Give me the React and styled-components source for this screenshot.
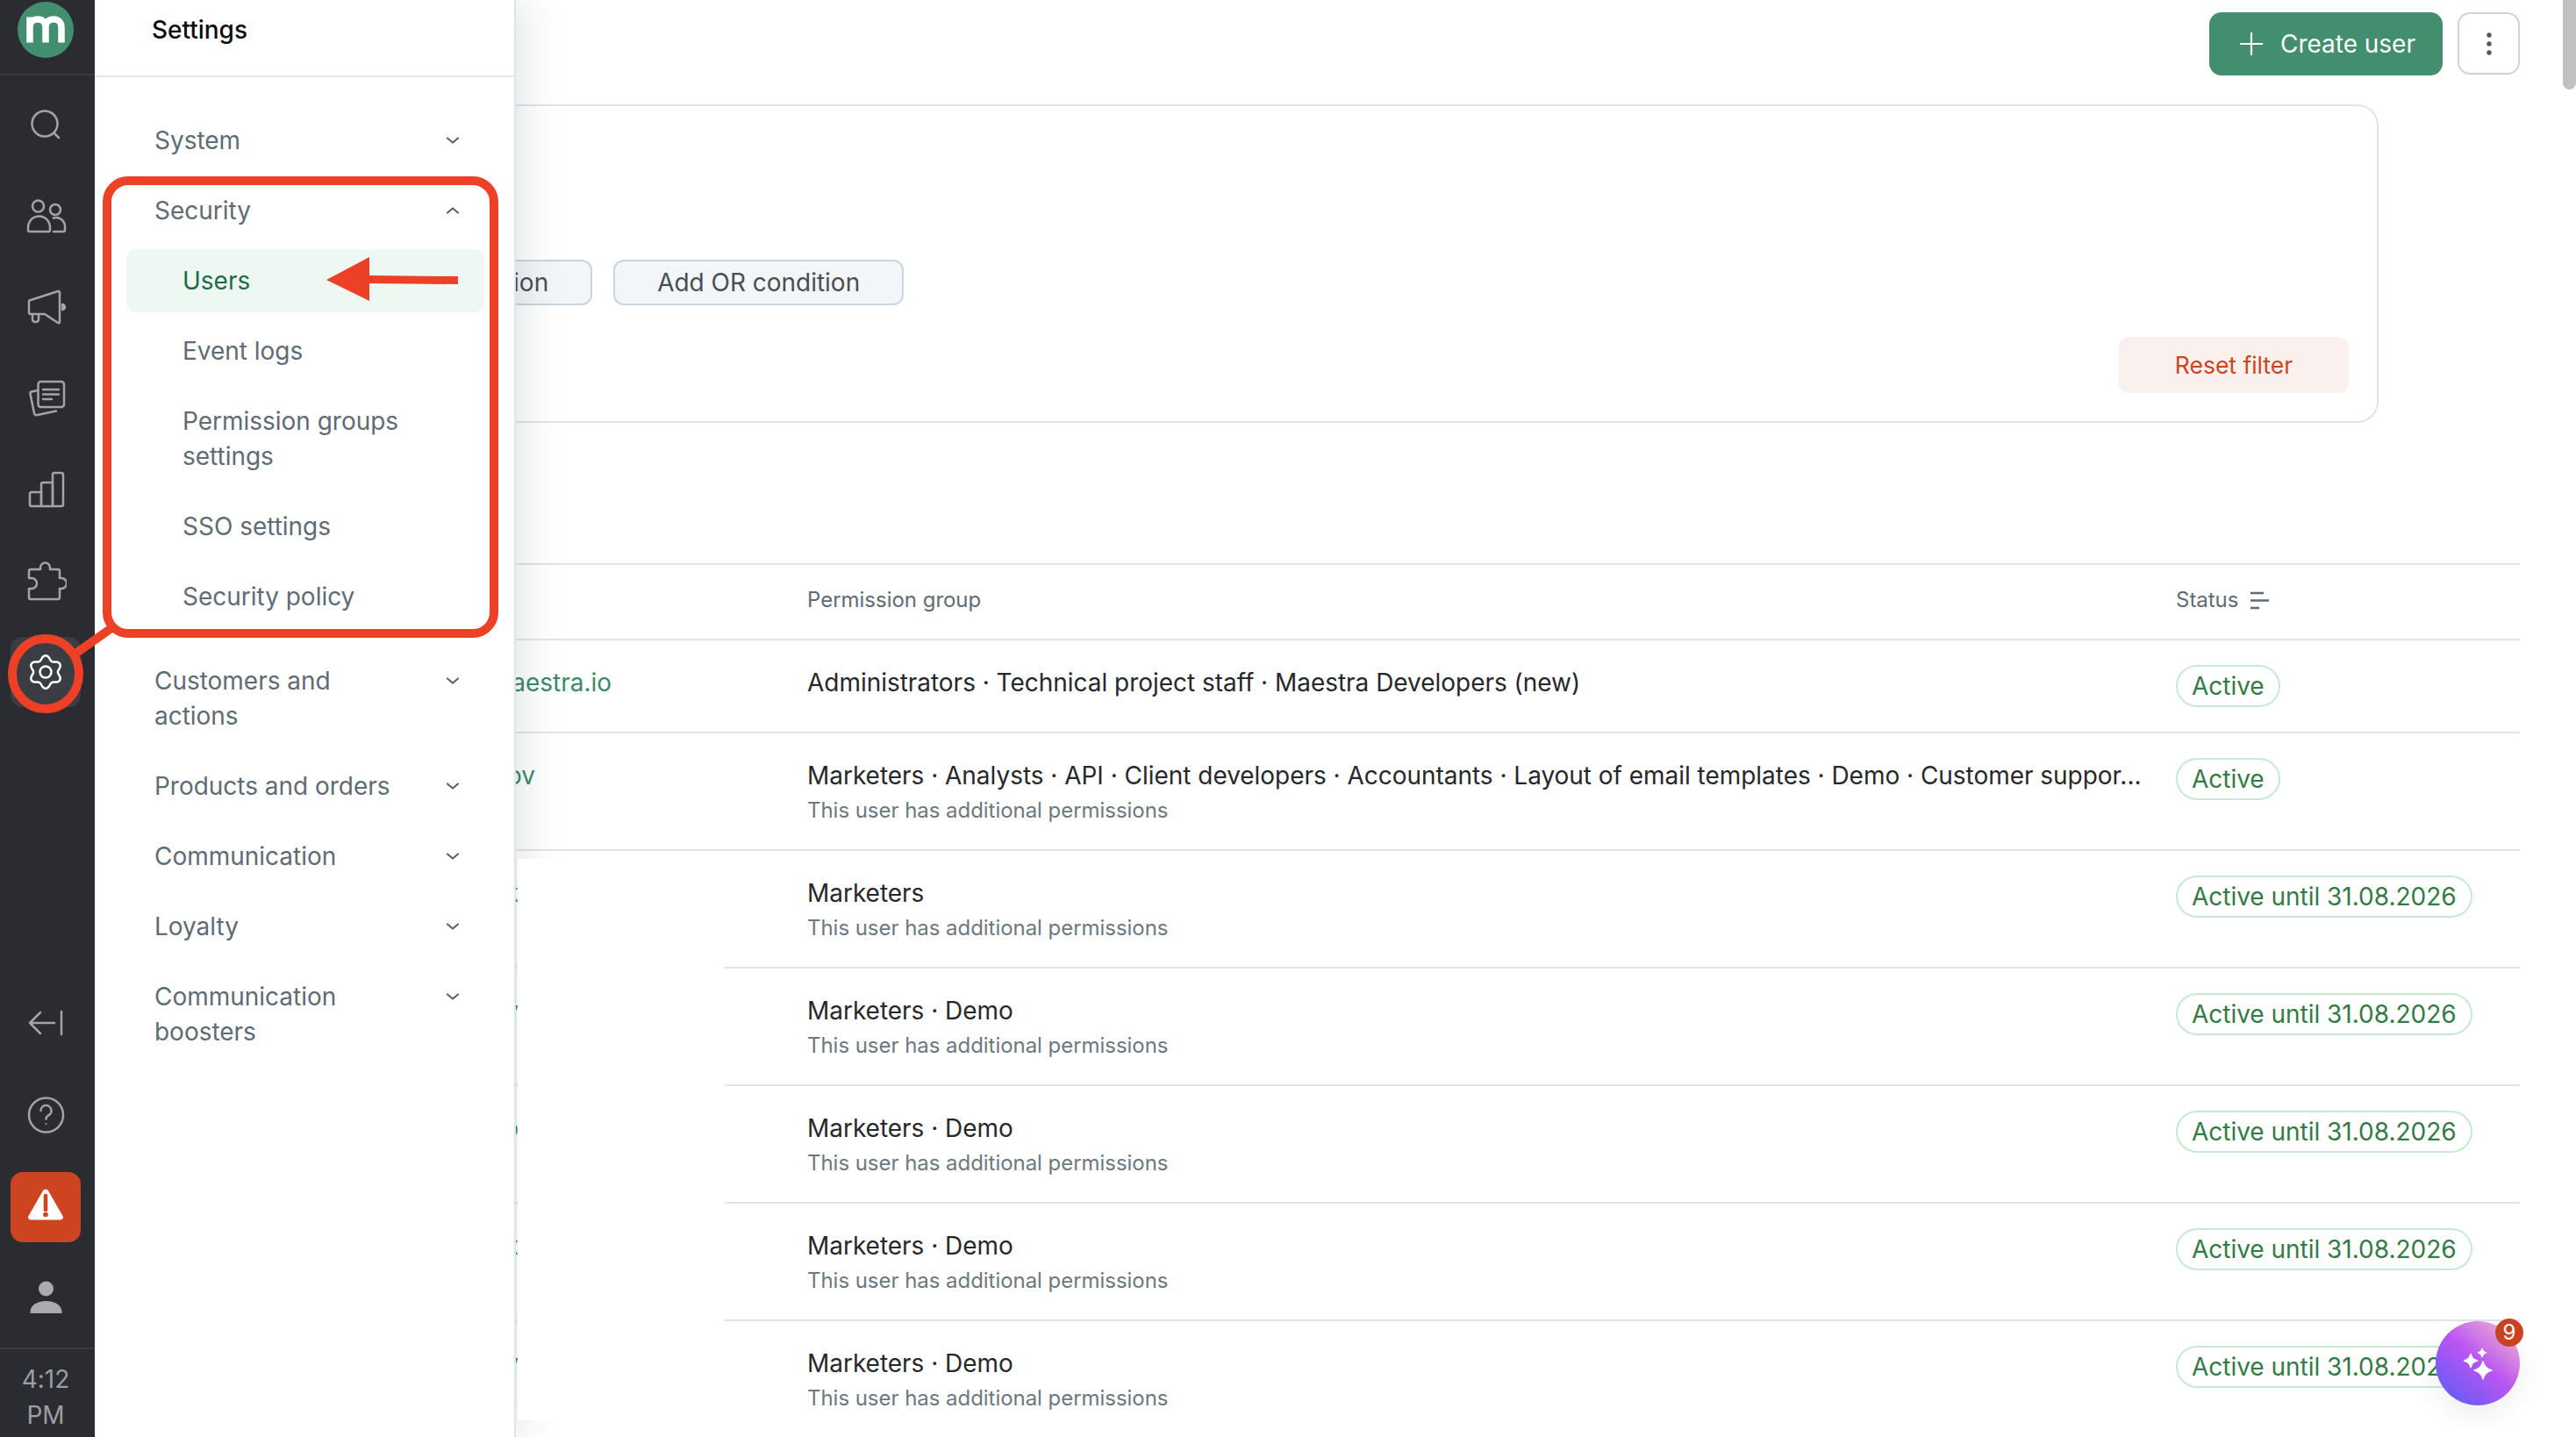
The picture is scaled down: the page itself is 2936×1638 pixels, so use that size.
import React from "react";
import styled, { createGlobalStyle } from "styled-components";

const Global = createGlobalStyle`
  html, body { margin: 0; padding: 0; width: 2936px; height: 1638px; overflow: hidden; background: #fff; }
  body { font-family: Inter, "Noto Sans", sans-serif; font-size: 28px; line-height: 40px; color: #26282c; letter-spacing: -0.02px; }
  * { box-sizing: border-box; }
`;

const Page = styled.div`
  position: relative; display: flex; width: 2936px; height: 1638px; overflow: hidden; background: #fff;
`;

/* ---------- rail ---------- */
const Rail = styled.aside`
  position: relative; z-index: 3; flex: 0 0 108px; height: 100%;
  display: flex; flex-direction: column; background: #2a2c32; color: #a2a4a8;
`;
const LogoBar = styled.div`
  height: 86px; flex: none; padding: 2px 0 0 20px; border-bottom: 2px solid #3b3d44;
`;
const RailGroup = styled.nav`
  display: flex; flex-direction: column; gap: ${p => p.$gap}px; padding: ${p => p.$top}px 0 0 12px;
`;
const RailFoot = styled.div`
  margin-top: auto; display: flex; flex-direction: column;
`;
const RailItem = styled.div`
  width: 80px; height: 80px; border-radius: 14px; display: flex; align-items: center; justify-content: center;
  background: ${p => (p.$warn ? "#cc4420" : p.$active ? "#3a3d44" : "transparent")};
  color: ${p => (p.$active ? "#fff" : "#a2a4a8")};
`;
const Clock = styled.div`
  margin-top: 15px; height: 102px; padding: 14px 4px 0 0; border-top: 2px solid #3b3d44;
  text-align: center; font-size: 28px; line-height: 41px; color: #9b9ea3; width: 108px;
`;
const Ico = styled.svg`
  width: 48px; height: 48px; fill: none; stroke: currentColor; stroke-width: 2.5;
  stroke-linecap: round; stroke-linejoin: round; display: block;
`;

/* ---------- settings panel ---------- */
const Panel = styled.aside`
  position: relative; z-index: 2; flex: 0 0 480px; height: 100%; background: #fff;
  border-right: 2px solid #dfe4e8; box-shadow: 0 0 50px rgba(30, 40, 50, 0.17);
`;
const PanelHead = styled.header`
  height: 88px; padding: 14px 0 0 65px; border-bottom: 2px solid #e3e8ec;
  font-weight: 500; color: #0c0d0e; font-size: 28px; line-height: 40px;
`;
const Menu = styled.nav`
  padding-top: 32px; display: flex; flex-direction: column;
`;
const Section = styled.div`
  display: flex; align-items: flex-start; justify-content: space-between;
  padding: 20px 62px 20px 68px; color: #5f6b75;
`;
const SectionLabel = styled.span`
  width: 292px;
`;
const Chevron = styled.svg`
  flex: none; width: 16px; height: 10px; margin-top: 15px; fill: none; stroke: #5a636b;
  stroke-width: 2.2; stroke-linecap: round; stroke-linejoin: round;
  transform: ${p => (p.$up ? "rotate(180deg)" : "none")};
`;
const SubList = styled.div`
  display: flex; flex-direction: column; margin-bottom: 16px;
`;
const SubItem = styled.div`
  margin: 4px 34px 4px 36px; padding: 16px 60px 16px 64px; border-radius: 12px;
  color: ${p => (p.$active ? "#1f6a48" : "#5f6b75")};
  background: ${p => (p.$active ? "#eef8f2" : "transparent")};
`;

/* ---------- main ---------- */
const Main = styled.main`
  position: relative; z-index: 1; flex: 1 1 auto; min-width: 0; margin-left: -480px;
  height: 100%; padding: 14px 64px 0 40px; overflow: hidden;
`;
const TopBar = styled.div`
  display: flex; justify-content: flex-end; gap: 17px; height: 72px;
`;
const CreateButton = styled.div`
  display: flex; align-items: center; gap: 20px; width: 266px; height: 72px; padding-left: 35px;
  background: #428e6e; color: #fff; border-radius: 14px;
`;
const MoreButton = styled.div`
  width: 71px; height: 71px; border: 2px solid #c9d5e0; border-radius: 14px;
  display: flex; align-items: center; justify-content: center; background: #fff;
`;
const FilterCard = styled.section`
  margin: 33px 161px 0 0; height: 363px; padding: 175px 32px 0 173px;
  border: 2px solid #dfe5ea; border-radius: 24px; display: flex; flex-direction: column;
`;
const ConditionRow = styled.div`
  display: flex; gap: 24px;
`;
const GhostButton = styled.div`
  height: 52px; padding: 0 48px; border: 2px solid #c9d5e0; border-radius: 12px; background: #f3f6f8;
  color: #4b4d50; display: flex; align-items: center; white-space: nowrap;
`;
const ResetButton = styled.div`
  align-self: flex-end; margin-top: 36px; width: 262px; height: 64px; border-radius: 12px;
  background: #faf0ed; color: #cc4522; font-size: 26.5px;
  display: flex; align-items: center; justify-content: center;
`;
const Table = styled.section`
  margin-top: 160px; border-top: 2px solid #e0e5ea;
`;
const Row = styled.div`
  display: grid; grid-template-columns: 772px 1560px 1fr; min-height: ${p => p.$h}px;
  padding: ${p => p.$pt || 28}px 0 0; border-bottom: 2px solid #e0e5ea; box-sizing: content-box;
`;
const HeadCell = styled.div`
  height: 34px; font-size: 24px; line-height: 34px; color: #5f6b75; display: flex; align-items: center; gap: 13px;
`;
const NameCell = styled.div`
  text-align: right; color: #3b8a6a; padding-right: ${p => p.$end}px; white-space: nowrap;
`;
const PermCell = styled.div`
  min-width: 0;
`;
const Groups = styled.div`
  white-space: nowrap; color: #26282c; letter-spacing: -0.03px;
`;
const Extra = styled.div`
  margin-top: 3px; font-size: 24px; line-height: 34px; color: #6d7880; letter-spacing: -0.04px;
`;
const StatusCell = styled.div`
  margin-top: 0;
`;
const Pill = styled.span`
  display: inline-flex; align-items: center; height: 48px; padding: 0 16px;
  border: 2px solid #c8e9d4; border-radius: 24px; color: #347a47; white-space: nowrap; background: #fff;
`;

/* ---------- overlays ---------- */
const Redaction = styled.div`
  position: absolute; z-index: 4; left: 590px; top: 979px; width: 236px; height: 640px; background: #fff;
`;
const Thumb = styled.div`
  position: absolute; z-index: 5; right: 0; top: 0; width: 15px; height: 102px; background: #c1c1c1;
  border-radius: 0 0 8px 8px;
`;
const Fab = styled.div`
  position: absolute; z-index: 6; left: 2776px; top: 1506px; width: 96px; height: 96px; border-radius: 50%;
  background: linear-gradient(40deg, #5f5cf8 8%, #bb55f2 52%, #f0b8d0 95%);
  box-shadow: 0 10px 30px rgba(40, 30, 80, 0.08);
`;
const FabBadge = styled.span`
  position: absolute; left: 68px; top: -3px; width: 32px; height: 32px; border-radius: 50%;
  background: #c94320; color: #fff; font-size: 24px; line-height: 32px; text-align: center;
`;
const Annotation = styled.svg`
  position: absolute; z-index: 7; left: 0; top: 0; width: 2936px; height: 1638px; pointer-events: none;
`;

/* ---------- icons ---------- */
const SearchIcon = () => (
  <Ico viewBox="0 0 48 48"><circle cx="23" cy="23" r="14.5" /><path d="M34 34l5 5" /></Ico>
);
const UsersIcon = () => (
  <Ico viewBox="0 0 48 48">
    <circle cx="15.5" cy="13" r="6.5" />
    <path d="M6 42h21a2 2 0 0 0 2-2v-3a12.5 12.5 0 0 0-25 0v3a2 2 0 0 0 2 2z" />
    <circle cx="35" cy="17" r="6" />
    <path d="M33 26.5a10 10 0 0 1 13 9.5v4a2 2 0 0 1-2 2H33" />
  </Ico>
);
const MegaphoneIcon = () => (
  <Ico viewBox="0 0 48 48">
    <path d="M7 16L38 6q2-.5 2 1v34q0 2-2 1L23 32H7q-2 0-2-2V18q0-2 2-2z" />
    <path d="M9 32v6a3 3 0 0 0 3 3h1a3 3 0 0 0 3-3v-6" />
    <path d="M43 21a3 3 0 0 1 0 6z" fill="currentColor" />
  </Ico>
);
const CardsIcon = () => (
  <Ico viewBox="0 0 48 48">
    <rect x="15.5" y="5" width="29.5" height="29" rx="3" />
    <path d="M21 14h18M21 19.5h18M21 25h10" />
    <path d="M15 15l-7 1.5q-2 .5-1.5 2.5L11 41q.5 3 3.500 2L36 38.500" />
  </Ico>
);
const ChartIcon = () => (
  <Ico viewBox="0 0 48 48">
    <path d="M8 27h11v16H8a2 2 0 0 1-2-2V29a2 2 0 0 1 2-2z" />
    <path d="M19 18a2 2 0 0 1 2-2h11v27H19z" />
    <path d="M32 7a2 2 0 0 1 2-2h8a2 2 0 0 1 2 2v34a2 2 0 0 1-2 2H32z" />
  </Ico>
);
const PuzzleIcon = () => (
  <Ico viewBox="0 0 48 48">
    <path d="M7 11h11V9a5.500 5.500 0 1 1 11 0v2h9a2 2 0 0 1 2 2v8h2a6 6 0 0 1 0 12h-2v10a2 2 0 0 1-2 2H7a2 2 0 0 1-2-2V33h3a6 6 0 0 0 0-12H5v-8a2 2 0 0 1 2-2z" />
  </Ico>
);
const gearPath = (() => {
  const pts = [];
  for (let i = 0; i < 180; i++) {
    const t = (i / 180) * Math.PI * 2;
    const r = 16.3 + 2.4 * Math.cos(6 * (t + Math.PI / 2));
    pts.push(`${(24 + r * Math.cos(t)).toFixed(2)} ${(24 + r * Math.sin(t)).toFixed(2)}`);
  }
  return `M${pts.join("L")}Z`;
})();
const GearIcon = () => (
  <Ico viewBox="0 0 48 48"><path d={gearPath} /><circle cx="24" cy="24" r="6.500" /></Ico>
);
const CollapseIcon = () => (
  <Ico viewBox="0 0 48 48"><path d="M34 24H6M18 12L6 24l12 12M42 11v26" /></Ico>
);
const HelpIcon = () => (
  <Ico viewBox="0 0 48 48">
    <circle cx="24.500" cy="24" r="19.500" />
    <path d="M18.500 19a6 6 0 1 1 8.500 5.500c-1.800.9-2.500 2-2.500 4" />
    <circle cx="24.500" cy="34" r="1.100" fill="currentColor" stroke="none" />
  </Ico>
);
const WarnIcon = () => (
  <svg width="48" height="48" viewBox="0 0 48 48">
    <g transform="translate(0 -3)">
      <path d="M24 6.500c1.300 0 2.400.7 3 1.800l16.600 29c1 1.800-.3 4.200-2.500 4.200H6.900c-2.200 0-3.500-2.400-2.500-4.200L21 8.300c.6-1.100 1.700-1.800 3-1.800z" fill="#fff" />
      <path d="M24 14v16" stroke="#cc4420" strokeWidth="4.600" strokeLinecap="round" />
      <circle cx="24" cy="35.500" r="2.800" fill="#cc4420" />
    </g>
  </svg>
);
const PersonIcon = () => (
  <svg width="48" height="48" viewBox="0 0 48 48" fill="#a9abaf">
    <circle cx="24.500" cy="12" r="8.500" />
    <path d="M6.500 40v-1.500C6.500 30 16 26 24.500 26S42.500 30 42.500 38.500V40z" />
  </svg>
);
const Logo = () => (
  <svg width="64" height="64" viewBox="0 0 64 64">
    <circle cx="32" cy="32" r="32" fill="#428e6e" />
    <path d="M14 46.500V17.500M14 29c0-6 4-9 9-9s9 3 9 9v17.500M32 29c0-6 4-9 9-9s9 3 9 9v17.500" fill="none" stroke="#fff" strokeWidth="7.500" />
  </svg>
);
const Chev = ({ up }) => (
  <Chevron viewBox="0 0 16 10" $up={up}><path d="M2 2.500l6 5 6-5" /></Chevron>
);
const PlusIcon = () => (
  <svg width="26" height="26" viewBox="0 0 26 26" stroke="#fff" strokeWidth="2.200"><path d="M13 0v26M0 13h26" /></svg>
);
const KebabIcon = () => (
  <svg width="8" height="30" viewBox="0 0 8 30" fill="#55585c">
    <circle cx="4" cy="5" r="2.700" /><circle cx="4" cy="15" r="2.700" /><circle cx="4" cy="25" r="2.700" />
  </svg>
);
const SortIcon = () => (
  <svg width="24" height="24" viewBox="0 0 24 24" stroke="#5f6b75" strokeWidth="2.400">
    <path d="M1 4h15M1 12.500h21M1 21h10" />
  </svg>
);
const star = (x, y, r) =>
  `M${x} ${y - r}Q${x + r * 0.18} ${y - r * 0.18} ${x + r} ${y}Q${x + r * 0.18} ${y + r * 0.18} ${x} ${y + r}Q${x - r * 0.18} ${y + r * 0.18} ${x - r} ${y}Q${x - r * 0.18} ${y - r * 0.18} ${x} ${y - r}Z`;
const Sparkles = () => (
  <svg width="96" height="96" viewBox="0 0 96 96" fill="#fff" stroke="#fff" strokeWidth="1.500" strokeLinejoin="round">
    <path d={star(54, 56, 10)} /><path d={star(40, 45, 7.500)} /><path d={star(53, 36, 4.500)} />
  </svg>
);

/* ---------- data ---------- */
const TOP_ICONS = [SearchIcon, UsersIcon, MegaphoneIcon, CardsIcon, ChartIcon, PuzzleIcon];
const UNTIL = "Active until 31.08.2026";
const EXTRA = "This user has additional permissions";
const ROWS = [
  { name: "maestra.io", end: 223, groups: "Administrators · Technical project staff · Maestra Developers (new)", status: "Active", h: 76 },
  { name: "ov", end: 310, groups: "Marketers · Analysts · API · Client developers · Accountants · Layout of email templates · Demo · Customer suppor...", extra: true, status: "Active", h: 104 },
  { name: "k", end: 329, groups: "Marketers", extra: true, status: UNTIL, h: 104 },
  { name: "v", end: 329, groups: "Marketers · Demo", extra: true, status: UNTIL, h: 104 },
  { name: "o", end: 329, groups: "Marketers · Demo", extra: true, status: UNTIL, h: 104 },
  { name: "x", end: 329, groups: "Marketers · Demo", extra: true, status: UNTIL, h: 104 },
  { name: "v", end: 329, groups: "Marketers · Demo", extra: true, status: UNTIL, h: 104 },
];

export default function App() {
  return (
    <Page>
      <Global />
      <Rail>
        <LogoBar><Logo /></LogoBar>
        <RailGroup $gap={24} $top={16}>
          {TOP_ICONS.map((I, i) => <RailItem key={i}><I /></RailItem>)}
          <RailItem $active><GearIcon /></RailItem>
        </RailGroup>
        <RailFoot>
          <RailGroup $gap={25} $top={0}>
            <RailItem><CollapseIcon /></RailItem>
            <RailItem><HelpIcon /></RailItem>
            <RailItem $warn><WarnIcon /></RailItem>
            <RailItem><PersonIcon /></RailItem>
          </RailGroup>
          <Clock>4:12<br />PM</Clock>
        </RailFoot>
      </Rail>

      <Panel>
        <PanelHead>Settings</PanelHead>
        <Menu>
          <Section><SectionLabel>System</SectionLabel><Chev /></Section>
          <Section><SectionLabel>Security</SectionLabel><Chev up /></Section>
          <SubList>
            <SubItem $active>Users</SubItem>
            <SubItem>Event logs</SubItem>
            <SubItem>Permission groups settings</SubItem>
            <SubItem>SSO settings</SubItem>
            <SubItem>Security policy</SubItem>
          </SubList>
          <Section><SectionLabel>Customers and actions</SectionLabel><Chev /></Section>
          <Section><SectionLabel>Products and orders</SectionLabel><Chev /></Section>
          <Section><SectionLabel>Communication</SectionLabel><Chev /></Section>
          <Section><SectionLabel>Loyalty</SectionLabel><Chev /></Section>
          <Section><SectionLabel>Communication boosters</SectionLabel><Chev /></Section>
        </Menu>
      </Panel>

      <Main>
        <TopBar>
          <CreateButton><PlusIcon />Create user</CreateButton>
          <MoreButton><KebabIcon /></MoreButton>
        </TopBar>
        <FilterCard>
          <ConditionRow>
            <GhostButton>Add AND condition</GhostButton>
            <GhostButton>Add OR condition</GhostButton>
          </ConditionRow>
          <ResetButton>Reset filter</ResetButton>
        </FilterCard>
        <Table>
          <Row $h={61} $pt={23}>
            <HeadCell />
            <HeadCell>Permission group</HeadCell>
            <HeadCell>Status<SortIcon /></HeadCell>
          </Row>
          {ROWS.map((r, i) => (
            <Row key={i} $h={r.h}>
              <NameCell $end={r.end}>{r.name}</NameCell>
              <PermCell>
                <Groups>{r.groups}</Groups>
                {r.extra && <Extra>{EXTRA}</Extra>}
              </PermCell>
              <StatusCell><Pill>{r.status}</Pill></StatusCell>
            </Row>
          ))}
        </Table>
      </Main>

      <Redaction />
      <Thumb />
      <Fab><Sparkles /><FabBadge>9</FabBadge></Fab>

      <Annotation viewBox="0 0 2936 1638">
        <rect x="122" y="206" width="441" height="516" rx="24" fill="none" stroke="#ec4126" strokeWidth="10" />
        <ellipse cx="52" cy="768" rx="38" ry="40" fill="none" stroke="#ec4126" strokeWidth="10" />
        <path d="M86 745L127 716" stroke="#ec4126" strokeWidth="10" />
        <path d="M372 319L421 293V314L522 315V324L421 323V343Z" fill="#ec4126" />
      </Annotation>
    </Page>
  );
}
